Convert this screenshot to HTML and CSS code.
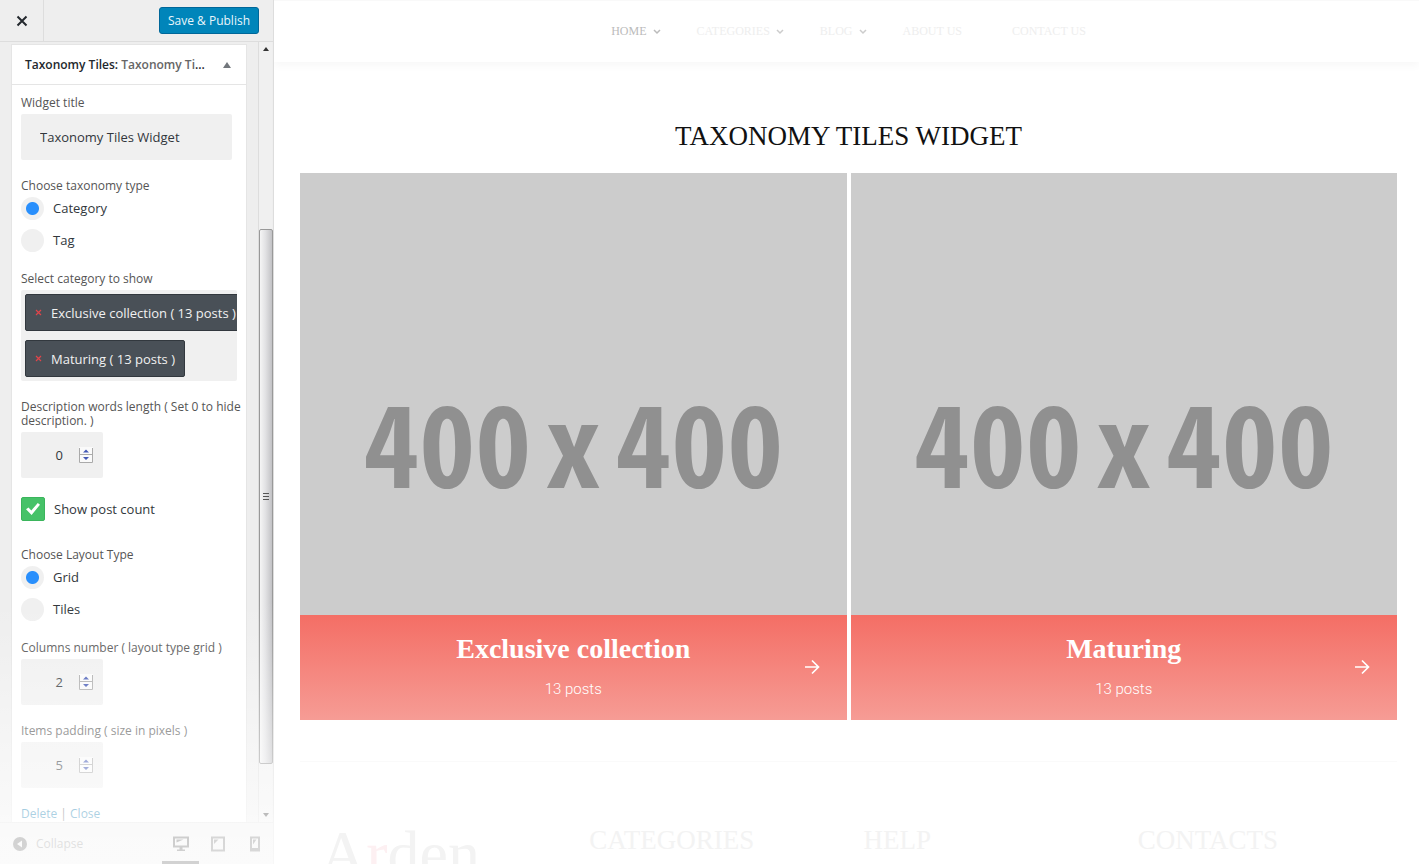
FILE: index.html
```html
<!DOCTYPE html>
<html lang="en">
<head>
<meta charset="utf-8">
<meta name="viewport" content="width=device-width, initial-scale=1">
<title>Customize: Taxonomy Tiles Widget</title>
<link rel="stylesheet" href="styles.css">
</head>
<body>
<div class="app">
  <aside class="sidebar">
    <header class="sidebar-header">
      <button class="close" type="button" aria-label="Close customizer">
        <svg width="12" height="12" viewBox="0 0 12 12"><path d="M1.500 1.500l9 9M10.500 1.500l-9 9" stroke="#23282d" stroke-width="2" fill="none"/></svg>
      </button>
      <button class="publish" type="button">Save &amp; Publish</button>
    </header>
    <div class="sidebar-body">
      <form class="widget">
        <h3 class="widget-head">
          <span class="widget-name">Taxonomy Tiles: <span class="widget-sub">Taxonomy Ti</span>...</span>
          <svg width="8" height="6" viewBox="0 0 8 6"><path d="M4 0l4 6H0z" fill="#72777c"/></svg>
        </h3>
        <div class="widget-form">
          <div class="field">
            <label class="label" for="title">Widget title</label>
            <input class="text-input" id="title" type="text" value="Taxonomy Tiles Widget">
          </div>
          <fieldset class="field">
            <legend class="label">Choose taxonomy type</legend>
            <div class="options">
              <label class="option"><input class="radio" type="radio" name="tax" checked>Category</label>
              <label class="option"><input class="radio" type="radio" name="tax">Tag</label>
            </div>
          </fieldset>
          <div class="field">
            <div class="label">Select category to show</div>
            <ul class="chips">
              <li class="chip"><button class="chip-remove" type="button" aria-label="Remove Exclusive collection"><svg width="7" height="7" viewBox="0 0 7 7"><path d="M1 1l5 5M6 1L1 6" stroke="#e0444a" stroke-width="1.2"/></svg></button>Exclusive collection ( 13 posts )</li>
              <li class="chip"><button class="chip-remove" type="button" aria-label="Remove Maturing"><svg width="7" height="7" viewBox="0 0 7 7"><path d="M1 1l5 5M6 1L1 6" stroke="#e0444a" stroke-width="1.2"/></svg></button>Maturing ( 13 posts )</li>
            </ul>
          </div>
          <div class="field">
            <label class="label" for="words">Description words length ( Set 0 to hide description. )</label>
            <div class="number">
              <input class="number-input" id="words" type="number" value="0">
              <svg class="spinner" width="14" height="16" viewBox="0 0 14 16"><path d="M0 0h14v16H0z" fill="#fafafa"/><path d="M.5 1v14.500h13V1M1 7.500h12" fill="none" stroke="#aaa"/><path d="M7 2.500l3 3H4zM7 13l3-3H4z" fill="#4358b5"/></svg>
            </div>
          </div>
          <label class="check-row"><input class="check" type="checkbox" checked>Show post count</label>
          <fieldset class="field">
            <legend class="label">Choose Layout Type</legend>
            <div class="options">
              <label class="option"><input class="radio" type="radio" name="layout" checked>Grid</label>
              <label class="option"><input class="radio" type="radio" name="layout">Tiles</label>
            </div>
          </fieldset>
          <div class="field">
            <label class="label" for="cols">Columns number ( layout type grid )</label>
            <div class="number">
              <input class="number-input" id="cols" type="number" value="2">
              <svg class="spinner" width="14" height="16" viewBox="0 0 14 16"><path d="M0 0h14v16H0z" fill="#fafafa"/><path d="M.5 1v14.500h13V1M1 7.500h12" fill="none" stroke="#aaa"/><path d="M7 2.500l3 3H4zM7 13l3-3H4z" fill="#4358b5"/></svg>
            </div>
          </div>
          <div class="field">
            <label class="label" for="pad">Items padding ( size in pixels )</label>
            <div class="number">
              <input class="number-input" id="pad" type="number" value="5">
              <svg class="spinner" width="14" height="16" viewBox="0 0 14 16"><path d="M0 0h14v16H0z" fill="#fafafa"/><path d="M.5 1v14.500h13V1M1 7.500h12" fill="none" stroke="#aaa"/><path d="M7 2.500l3 3H4zM7 13l3-3H4z" fill="#4358b5"/></svg>
            </div>
          </div>
          <div class="links"><a href="#delete">Delete</a> | <a href="#close">Close</a></div>
        </div>
      </form>
      <div class="scrollbar" aria-hidden="true">
        <svg width="6" height="4" viewBox="0 0 6 4"><path d="M3 0l3 4H0z" fill="#333"/></svg>
        <div class="track"><div class="thumb"><svg width="6" height="7" viewBox="0 0 6 7"><path d="M0 .5h6M0 3.500h6M0 6.500h6" stroke="#555"/></svg></div></div>
        <svg width="6" height="4" viewBox="0 0 6 4"><path d="M3 4l3-4H0z" fill="#333"/></svg>
      </div>
    </div>
    <footer class="sidebar-footer">
      <button class="collapse" type="button">
        <svg width="14" height="14" viewBox="0 0 14 14"><circle cx="7" cy="7" r="7" fill="#555"/><path d="M9 3.500v7L4 7z" fill="#eee"/></svg>
        Collapse
      </button>
      <div class="devices">
        <button class="device device-active" type="button" aria-label="Desktop preview"><svg width="16" height="16" viewBox="0 0 16 16"><path d="M1 1.500h14v9H1z" fill="none" stroke="#444" stroke-width="2"/><path d="M3.500 3.500h7l-7 3zM6.500 11h3v2.500h2.500V15H4v-1.500h2.500z" fill="#444"/></svg></button>
        <button class="device" type="button" aria-label="Tablet preview"><svg width="14" height="16" viewBox="0 0 14 16"><path d="M1 1.500h12v13H1z" fill="none" stroke="#666" stroke-width="2"/><path d="M3 3.500h4.500L3 8z" fill="#666"/></svg></button>
        <button class="device" type="button" aria-label="Mobile preview"><svg width="10" height="16" viewBox="0 0 10 16"><path d="M1 1.500h8v13H1z" fill="none" stroke="#666" stroke-width="2"/><path d="M3 3.500h3.500L3 8.500zM1 12h8v2.500H1z" fill="#666"/></svg></button>
      </div>
    </footer>
  </aside>

  <main class="preview">
    <nav class="nav">
      <a class="nav-link nav-current" href="#home">HOME <svg width="8" height="6" viewBox="0 0 8 6"><path d="M1 1l3 3 3-3" fill="none" stroke="#bbb" stroke-width="1.500"/></svg></a>
      <a class="nav-link" href="#categories">CATEGORIES <svg width="8" height="6" viewBox="0 0 8 6"><path d="M1 1l3 3 3-3" fill="none" stroke="#ccc" stroke-width="1.500"/></svg></a>
      <a class="nav-link" href="#blog">BLOG <svg width="8" height="6" viewBox="0 0 8 6"><path d="M1 1l3 3 3-3" fill="none" stroke="#ccc" stroke-width="1.500"/></svg></a>
      <a class="nav-link nav-plain" href="#about">ABOUT US</a>
      <a class="nav-link" href="#contact">CONTACT US</a>
    </nav>
    <section class="content">
      <h1 class="title">TAXONOMY TILES WIDGET</h1>
      <div class="tiles">
        <article class="tile">
          <div class="placeholder"><span>400</span> <span>x</span> <span>400</span></div>
          <a class="caption" href="#exclusive">
            <span class="caption-text"><span class="caption-title">Exclusive collection</span><span class="caption-count">13 posts</span></span>
            <svg class="arrow" width="16" height="16" viewBox="0 0 16 16"><path d="M1 8h13M8 1.500L14.500 8 8 14.500" fill="none" stroke="#fff" stroke-width="1.700"/></svg>
          </a>
        </article>
        <article class="tile">
          <div class="placeholder"><span>400</span> <span>x</span> <span>400</span></div>
          <a class="caption" href="#maturing">
            <span class="caption-text"><span class="caption-title">Maturing</span><span class="caption-count">13 posts</span></span>
            <svg class="arrow" width="16" height="16" viewBox="0 0 16 16"><path d="M1 8h13M8 1.500L14.500 8 8 14.500" fill="none" stroke="#fff" stroke-width="1.700"/></svg>
          </a>
        </article>
      </div>
    </section>
    <footer class="site-footer">
      <div class="brand">A<span class="brand-accent">r</span>den</div>
      <h2 class="footer-title">CATEGORIES</h2>
      <h2 class="footer-title">HELP</h2>
      <h2 class="footer-title">CONTACTS</h2>
    </footer>
  </main>
</div>
</body>
</html>
```

FILE: styles.css
```css
* { box-sizing: border-box; }

body {
  margin: 0;
  background: #fff;
  font-family: "Open Sans", sans-serif;
  font-size: 13px;
  color: #32373c;
}

button { font: inherit; color: inherit; cursor: pointer; }
a { text-decoration: none; }
svg { display: block; flex: none; }

.app { display: flex; height: 100vh; overflow: hidden; }

/* Sidebar */
.sidebar {
  position: relative;
  display: flex;
  flex-direction: column;
  flex: 0 0 274px;
  background: #eee;
  border-right: 1px solid #ddd;
}

.sidebar::after {
  content: "";
  position: absolute;
  inset: auto -1px 0 0;
  height: 264px;
  background: linear-gradient(rgba(255, 255, 255, 0), rgba(255, 255, 255, 0.12) 19%, rgba(255, 255, 255, 0.4) 49%, rgba(255, 255, 255, 0.65) 80%, rgba(255, 255, 255, 0.72) 84%, rgba(255, 255, 255, 0.76));
  pointer-events: none;
}

.sidebar-header {
  display: flex;
  align-items: center;
  justify-content: space-between;
  flex: none;
  height: 42px;
  padding-right: 14px;
  border-bottom: 1px solid #ddd;
}

.close {
  display: grid;
  place-items: center;
  width: 44px;
  height: 41px;
  padding: 0;
  background: none;
  border: 0;
  border-right: 1px solid #ddd;
}

.publish {
  height: 27px;
  padding: 0 8px;
  background: #0085ba;
  border: 1px solid #006799;
  border-radius: 3px;
  color: #e8f6fc;
  font-size: 12px;
  line-height: 25px;
}

.sidebar-body {
  display: flex;
  justify-content: space-between;
  flex: 1;
  min-height: 0;
  overflow: hidden;
  padding: 0 1px 0 11px;
}

.widget {
  width: 236px;
  height: max-content;
  margin-top: 2px;
  background: #fff;
  border: 1px solid #e5e5e5;
}

.widget-head {
  display: flex;
  align-items: center;
  justify-content: space-between;
  height: 40px;
  margin: 0;
  padding: 0 15px 0 13px;
  border-bottom: 1px solid #e5e5e5;
  font-size: 12px;
  font-weight: 600;
  color: #23282d;
}

.widget-sub { color: #666; }

.widget-form {
  display: flex;
  flex-direction: column;
  gap: 19px;
  padding: 11px 9px;
}

.field {
  display: flex;
  flex-direction: column;
  gap: 4px;
  min-width: 0;
  margin: 0;
  padding: 0;
  border: 0;
}

.label {
  margin-right: -9px;
  padding: 0;
  font-size: 12px;
  line-height: 14px;
  color: #555;
}

.text-input, .number-input {
  height: 46px;
  border: 0;
  border-radius: 2px;
  background: #f0f0f0;
  font: inherit;
  color: #32373c;
}

.text-input { width: 211px; padding: 0 19px; }

.options { display: flex; flex-direction: column; gap: 8px; padding: 3px 0 1px; }

.option { display: flex; align-items: center; gap: 9px; height: 24px; }

.radio, .check { appearance: none; flex: none; margin: 0; }

.radio {
  width: 23px;
  height: 23px;
  border-radius: 50%;
  background: #f0f0f0;
}

.radio:checked { background: radial-gradient(circle, #298ffc 6px, #f0f0f0 7px); }

.chips {
  display: flex;
  flex-direction: column;
  align-items: flex-start;
  gap: 9px;
  width: 216px;
  margin: 0;
  padding: 4px;
  overflow: hidden;
  border-radius: 2px;
  background: #f0f0f0;
  list-style: none;
}

.chip {
  display: flex;
  align-items: center;
  gap: 9px;
  height: 37px;
  padding: 0 9px;
  border: 1px solid #32383e;
  border-radius: 2px;
  background: #495057;
  color: #f1f1f1;
  white-space: nowrap;
}

.chip-remove { padding: 0; border: 0; background: none; }

.number { position: relative; width: 82px; }

.number-input {
  appearance: textfield;
  display: block;
  width: 100%;
  padding: 0 40px 0 19px;
  text-align: right;
}

.number-input::-webkit-inner-spin-button { appearance: none; margin: 0; }

.spinner { position: absolute; top: 15px; right: 10px; }

.check-row {
  display: flex;
  align-items: center;
  gap: 9px;
  height: 24px;
  margin-bottom: 8px;
}

.check {
  display: grid;
  place-items: center;
  width: 24px;
  height: 24px;
  border: 1px solid #3bb55c;
  border-radius: 2px;
  background: #46c268;
}

.check:checked::before {
  content: "";
  width: 14px;
  height: 12px;
  background: #fff;
  clip-path: polygon(0 52%, 18% 38%, 38% 62%, 84% 0, 100% 14%, 40% 100%);
}

.links { font-size: 12px; line-height: 14px; color: #555; }
.links a { color: #0073aa; }

.scrollbar {
  display: flex;
  flex-direction: column;
  align-items: center;
  width: 14px;
  padding: 5px 0;
  background: #f0f0f0;
  border-left: 1px solid #ddd;
}

.track { flex: 1; width: 14px; padding: 178px 0 49px; }

.thumb {
  display: grid;
  place-items: center;
  height: 100%;
  border: 1px solid #999;
  border-radius: 2px;
  background: linear-gradient(90deg, #f5f5f5, #e2e2e4 45%, #c2c2c5);
}

.sidebar-footer {
  display: flex;
  align-items: center;
  justify-content: space-between;
  flex: none;
  height: 42px;
  padding: 0 0 0 13px;
  border-top: 1px solid #ddd;
}

.collapse {
  display: flex;
  align-items: center;
  gap: 9px;
  padding: 0;
  background: none;
  border: 0;
  color: #888;
  font-size: 12px;
}

.devices { display: flex; align-self: stretch; }

.device {
  display: grid;
  place-items: center;
  width: 37px;
  padding: 3px 0 0;
  border: 0;
  border-bottom: 3px solid transparent;
  background: none;
}

.device-active { border-bottom-color: #444; }

/* Preview */
.preview { flex: 1; min-width: 0; overflow: hidden; }

.nav {
  display: flex;
  align-items: center;
  justify-content: center;
  gap: 36px;
  height: 62px;
  padding-left: 4px;
  border-top: 1px solid #f9f9f9;
  box-shadow: 0 4px 8px rgba(0, 0, 0, 0.03);
}

.nav-link {
  display: flex;
  align-items: center;
  gap: 6px;
  color: #eee;
  font: 12px "Liberation Serif", serif;
}

.nav-current { color: #bbb; }
.nav-plain { margin-right: 14px; }

.content {
  margin: 0 22px 0 26px;
  padding-bottom: 41px;
  border-bottom: 1px solid #fafafa;
}

.title {
  margin: 0;
  padding: 58px 0 20px;
  color: #111;
  font: 27px/33px "Liberation Serif", serif;
  text-align: center;
}

.tiles { display: grid; grid-template-columns: 1fr 1fr; gap: 4px; }

.tile {
  position: relative;
  aspect-ratio: 1;
  background: #ccc;
}

.placeholder {
  display: flex;
  align-items: center;
  justify-content: center;
  gap: 14px;
  height: 100%;
  padding-bottom: 14px;
  color: #909090;
  font: bold 112px/120px "Noto Sans Mono CJK SC", "Noto Sans CJK SC", sans-serif;
  white-space: nowrap;
}

.caption {
  position: absolute;
  inset: auto 0 0;
  display: flex;
  align-items: center;
  justify-content: center;
  height: 105px;
  background: linear-gradient(#f46e65, #f69c95);
  color: #fff;
}

.caption-text { display: flex; flex-direction: column; align-items: center; gap: 16px; }
.caption-title { font: bold 28px/28px "Liberation Serif", serif; }
.caption-count { font: 300 15px/20px Roboto, sans-serif; }
.arrow { position: absolute; right: 27px; }

.site-footer {
  display: grid;
  grid-template-columns: repeat(4, 1fr);
  margin: 0 22px 0 26px;
  padding-top: 60px;
}

.brand {
  padding-left: 20px;
  color: #f3f3f3;
  font: 64px/64px "Liberation Serif", serif;
}

.brand-accent { color: #fdf0f2; }

.footer-title {
  margin: 0;
  padding-left: 15px;
  color: #f3f3f3;
  font: 27px/36px "Liberation Serif", serif;
}
```
